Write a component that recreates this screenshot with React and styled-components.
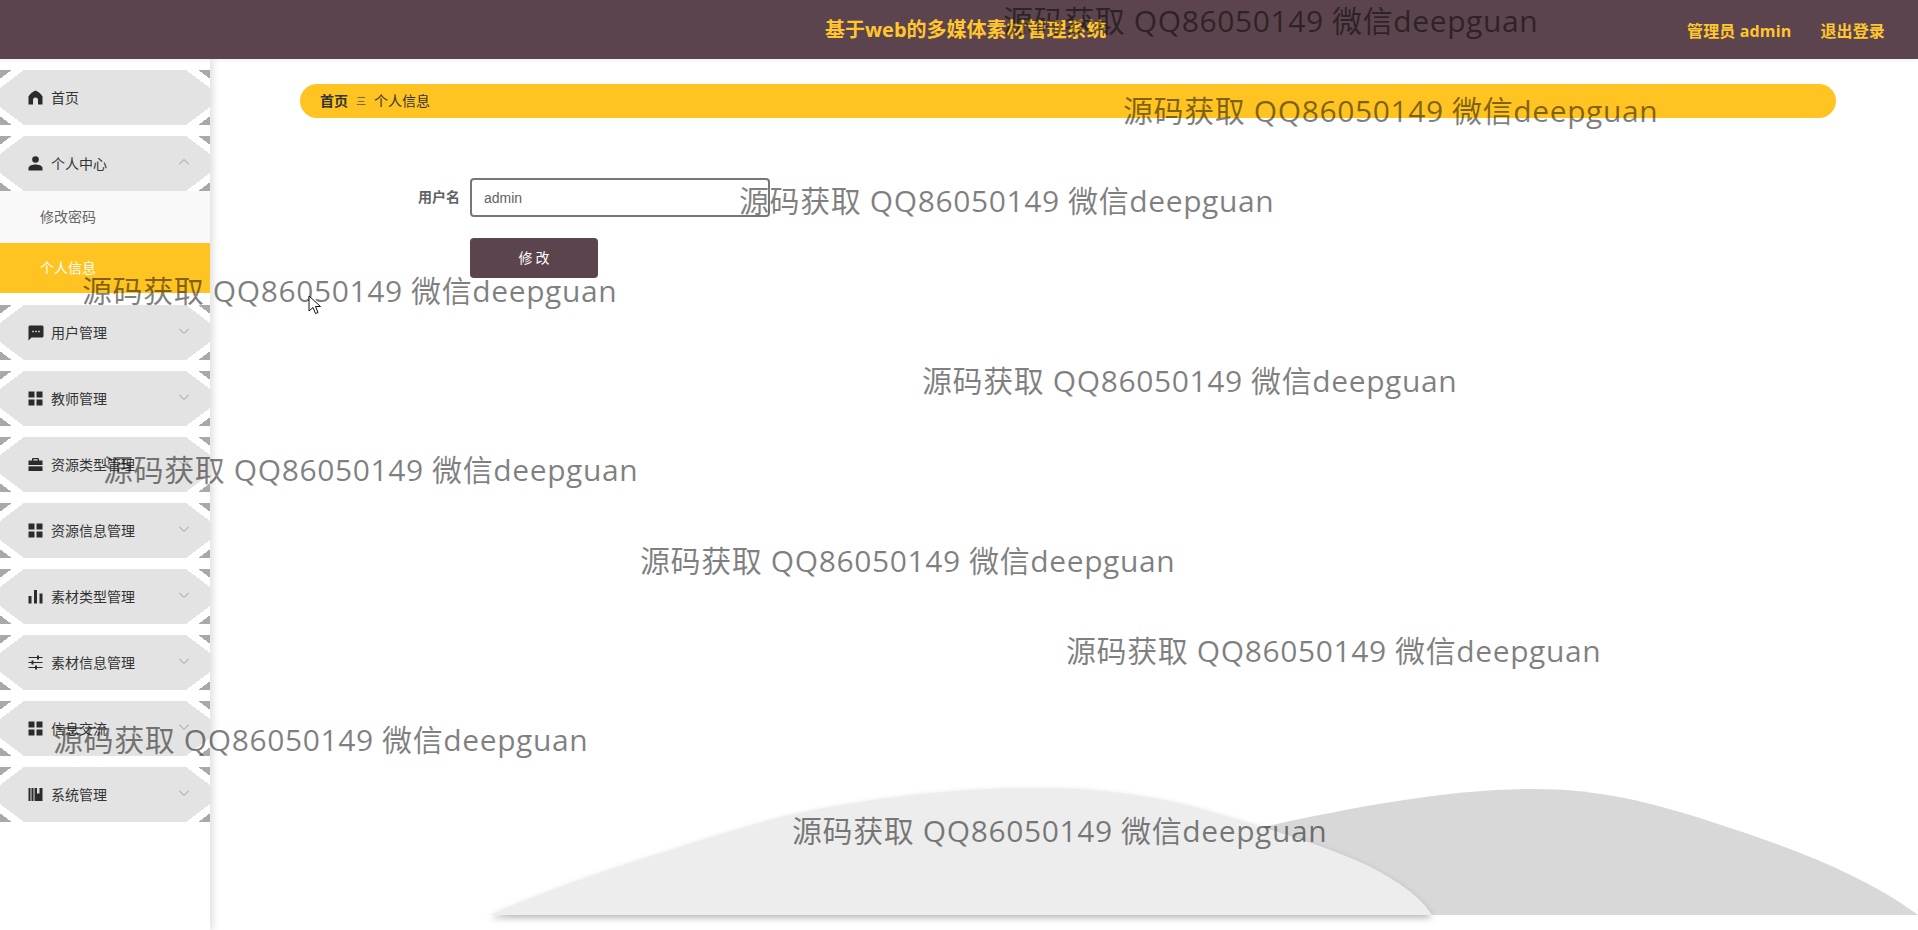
import React from "react";
import styled, { createGlobalStyle, css } from "styled-components";
import { MdSms } from "react-icons/md";

const Global = createGlobalStyle`
  html, body { margin: 0; padding: 0; background: #fff; }
  body { font-family: "Noto Sans CJK SC", "Liberation Sans", sans-serif; overflow: hidden; }
  * { box-sizing: border-box; }
`;

const Page = styled.div`
  position: relative;
  width: 1918px;
  height: 930px;
  overflow: hidden;
  display: flex;
  flex-direction: column;
`;

const Header = styled.header`
  height: 59px;
  flex: none;
  background: #5b444d;
  display: grid;
  grid-template-columns: 825px auto 1fr auto;
  align-items: center;
  padding-right: 33px;
  box-shadow: 0 1px 4px rgba(90, 90, 140, 0.12);
  position: relative;
  z-index: 2;
  color: #ffc62e;
  font-weight: 700;
`;

const Title = styled.h1`
  grid-column: 2;
  margin: 0;
  font-size: 20px;
  font-weight: 700;
  line-height: 59px;
  font-family: "Open Sans", "Noto Sans CJK SC", sans-serif;
`;

const HeaderLinks = styled.div`
  grid-column: 4;
  display: flex;
  gap: 29px;
  font-size: 16px;
  letter-spacing: 0.15px;
  font-family: "Open Sans", "Noto Sans CJK SC", sans-serif;
`;

const Body = styled.div`
  flex: 1;
  display: flex;
  min-height: 0;
`;

const Sidebar = styled.aside`
  width: 210px;
  flex: none;
  padding-top: 11px;
  display: flex;
  flex-direction: column;
  gap: 11px;
  background: #fff;
  box-shadow: 3px 0 7px rgba(0, 0, 0, 0.13);
  position: relative;
  z-index: 1;
`;

const corner = (dir, pos) =>
  `linear-gradient(to ${dir}, #a9a9a9 24%, #fff 24% 50%, transparent 50%) ${pos} / 24px 18px no-repeat`;

const MenuItem = styled.div`
  height: 55px;
  display: flex;
  align-items: center;
  padding: 0 21px 0 28px;
  font-size: 14px;
  color: #333;
  background: ${corner("bottom right", "left top")},
    ${corner("bottom left", "right top")},
    ${corner("top right", "left bottom")},
    ${corner("top left", "right bottom")},
    #e3e3e3;
`;

const IconSlot = styled.span`
  width: 15px;
  height: 15px;
  display: flex;
  align-items: center;
  justify-content: center;
  margin-right: 8px;
  color: #2b2b2b;
  flex: none;
  font-size: 18px;

  svg {
    flex: none;
  }
`;

const Label = styled.span`
  flex: 1;
  white-space: nowrap;
  line-height: 1;
  margin-top: -2px;
`;

const Chevron = styled.svg`
  width: 10px;
  height: 6px;
  margin-top: -3px;
  flex: none;
  fill: none;
  stroke: #9a9a9a;
  stroke-width: 1;
`;

const Group = styled.div`
  display: flex;
  flex-direction: column;
  margin-bottom: 1px;
`;

const SubItem = styled.div`
  display: flex;
  align-items: center;
  padding: 0 0 2px 40px;
  font-size: 14px;
  ${(p) =>
    p.$active
      ? css`
          height: 50px;
          background: #ffc421;
          color: #fff;
        `
      : css`
          height: 52px;
          background: #f9f9f9;
          color: #666;
        `}
`;

const Main = styled.main`
  flex: 1;
  padding: 25px 82px 0 90px;
`;

const Breadcrumb = styled.nav`
  height: 34px;
  border-radius: 17px;
  background: #ffc421;
  display: flex;
  align-items: center;
  padding: 0 0 2px 20px;
  font-size: 14px;
  color: #333;
`;

const Crumb = styled.span`
  font-weight: ${(p) => (p.$strong ? 700 : 400)};
`;

const CrumbSep = styled.span`
  width: 26px;
  text-align: center;
  font-size: 10px;
  color: #555;
`;

const Form = styled.form`
  margin: 60px 0 0 -90px;
  display: grid;
  grid-template-columns: 250px 300px;
  column-gap: 10px;
  row-gap: 21px;
  align-items: center;
`;

const FieldLabel = styled.label`
  text-align: right;
  font-size: 14px;
  font-weight: 700;
  color: #606266;
  margin-top: -3px;
`;

const Input = styled.input`
  height: 39px;
  width: 300px;
  border: 2px solid #777;
  border-radius: 4px;
  padding: 0 12px;
  font-size: 14px;
  font-family: "Liberation Sans", sans-serif;
  color: #606266;
  background: #fff;
  outline: none;
`;

const SubmitButton = styled.button`
  grid-column: 2;
  width: 128px;
  height: 40px;
  border: 0;
  border-radius: 4px;
  padding: 0 0 3px;
  background: #5b444d;
  color: #fff;
  font-family: inherit;
  font-size: 14px;
`;

const Hills = styled.svg`
  position: absolute;
  right: 0;
  bottom: 0;
  width: 1438px;
  height: 160px;
  pointer-events: none;
`;

const BackHill = styled.path`
  fill: #d8d8d8;
`;

const FrontHill = styled.path`
  fill: #ededed;
  filter: drop-shadow(0 3px 3px rgba(0, 0, 0, 0.28));
`;

const Watermark = styled.div`
  position: absolute;
  left: ${(p) => p.$x}px;
  top: ${(p) => p.$y}px;
  font-family: "Open Sans", "Noto Sans CJK SC", sans-serif;
  font-size: 30px;
  line-height: 40px;
  font-weight: 400;
  letter-spacing: 0.6px;
  color: rgba(0, 0, 0, 0.5);
  white-space: nowrap;
  pointer-events: none;
  z-index: 5;
`;

const Cursor = styled.svg`
  position: absolute;
  left: 308px;
  top: 295px;
  width: 13px;
  height: 20px;
  z-index: 6;
`;

const Glyph = ({ children }) => (
  <svg width="15" height="15" viewBox="0 0 15 15" fill="currentColor">
    {children}
  </svg>
);

const HomeIcon = () => (
  <Glyph>
    <path d="M7.5 0.5C10 1.5 13 3.5 14.5 6.5V14.5H10V10a2.5 2.5 0 0 0-5 0v4.5H0.5V6.5C2 3.5 5 1.5 7.5 0.5z" />
  </Glyph>
);

const PersonIcon = () => (
  <Glyph>
    <circle cx="7.5" cy="3.5" r="3.3" />
    <path d="M0.5 14.5V12c0-2.4 4.5-3.5 7-3.5s7 1.100 7 3.500v2.500z" />
  </Glyph>
);

const GridIcon = () => (
  <Glyph>
    <rect x="0.5" y="0.5" width="6" height="6" />
    <rect x="8.5" y="0.500" width="6" height="6" />
    <rect x="0.5" y="8.500" width="6" height="6" />
    <rect x="8.5" y="8.500" width="6" height="6" />
  </Glyph>
);

const BriefcaseIcon = () => (
  <Glyph>
    <path
      fillRule="evenodd"
      d="M5 1h5a1 1 0 0 1 1 1v1.500h3.500V8H0.500V3.500H4V2a1 1 0 0 1 1-1zM5.300 2.300v1.200h4.400V2.300z"
    />
    <rect x="0.5" y="9.300" width="14" height="4.700" />
  </Glyph>
);

const BarsIcon = () => (
  <Glyph>
    <rect x="0.5" y="7" width="3" height="7.500" />
    <rect x="6" y="1" width="3" height="13.500" />
    <rect x="11.5" y="4.500" width="3" height="10" />
  </Glyph>
);

const TuneIcon = () => (
  <Glyph>
    <rect x="0.5" y="2" width="14" height="1" />
    <rect x="0.5" y="7" width="14" height="1" />
    <rect x="0.5" y="12" width="14" height="1" />
    <rect x="9" y="0.500" width="2" height="4" />
    <rect x="3.500" y="5.500" width="2" height="4" />
    <rect x="7" y="10.500" width="2" height="4" />
  </Glyph>
);

const LibraryIcon = () => (
  <Glyph>
    <rect x="0.5" y="1" width="2" height="13" />
    <rect x="3.5" y="1" width="2" height="13" />
    <path d="M6.5 1h2.500v6l1.500-1 1 1V1h3v13h-8z" />
  </Glyph>
);

const menu = [
  { label: "首页", icon: <HomeIcon />, noChevron: true },
  { label: "个人中心", icon: <PersonIcon />, open: true },
  { label: "用户管理", icon: <MdSms /> },
  { label: "教师管理", icon: <GridIcon /> },
  { label: "资源类型管理", icon: <BriefcaseIcon /> },
  { label: "资源信息管理", icon: <GridIcon /> },
  { label: "素材类型管理", icon: <BarsIcon /> },
  { label: "素材信息管理", icon: <TuneIcon /> },
  { label: "信息交流", icon: <GridIcon /> },
  { label: "系统管理", icon: <LibraryIcon /> },
];

const marks = [
  [1003, 1],
  [1123, 91],
  [739, 181],
  [82, 271],
  [922, 361],
  [103, 450],
  [640, 541],
  [1066, 631],
  [53, 720],
  [792, 811],
];

const Row = ({ item }) => (
  <MenuItem>
    <IconSlot>{item.icon}</IconSlot>
    <Label>{item.label}</Label>
    {!item.noChevron && (
      <Chevron viewBox="0 0 10 6">
        <polyline points={item.open ? "0,5.5 5,0.5 10,5.5" : "0,0.5 5,5.5 10,0.5"} />
      </Chevron>
    )}
  </MenuItem>
);

export default function App() {
  return (
    <Page>
      <Global />
      <Header>
        <Title>基于web的多媒体素材管理系统</Title>
        <HeaderLinks>
          <span>管理员 admin</span>
          <span>退出登录</span>
        </HeaderLinks>
      </Header>
      <Body>
        <Sidebar>
          {menu.map((item) =>
            item.open ? (
              <Group key={item.label}>
                <Row item={item} />
                <SubItem>修改密码</SubItem>
                <SubItem $active>个人信息</SubItem>
              </Group>
            ) : (
              <Row key={item.label} item={item} />
            )
          )}
        </Sidebar>
        <Main>
          <Breadcrumb>
            <Crumb $strong>首页</Crumb>
            <CrumbSep>三</CrumbSep>
            <Crumb>个人信息</Crumb>
          </Breadcrumb>
          <Form>
            <FieldLabel>用户名</FieldLabel>
            <Input defaultValue="admin" />
            <SubmitButton type="button">修 改</SubmitButton>
          </Form>
        </Main>
      </Body>
      <Hills viewBox="480 770 1438 160">
        <BackHill d="M1240 915 L1240 832 C1330 812 1440 789 1533 789 C1600 789 1650 802 1712 822 C1780 844 1860 872 1918 915 Z" />
        <FrontHill d="M490 915 C560 885 640 858 770 820 C860 798 960 788 1040 788 C1100 788 1160 797 1204 810 C1270 828 1330 848 1367 865 C1400 882 1422 898 1432 915 Z" />
      </Hills>
      {marks.map(([x, y]) => (
        <Watermark key={x} $x={x} $y={y}>
          源码获取 QQ86050149 微信deepguan
        </Watermark>
      ))}
      <Cursor viewBox="0 0 13 20">
        <path d="M1 1v15l4-3.500 2.500 6 2.500-1-2.500-6h5z" fill="#fff" stroke="#111" strokeWidth="1" />
      </Cursor>
    </Page>
  );
}
